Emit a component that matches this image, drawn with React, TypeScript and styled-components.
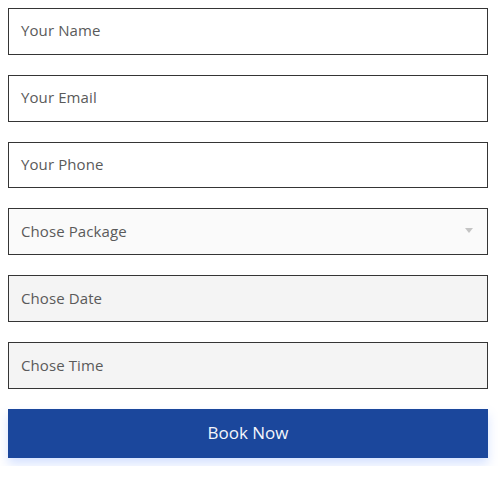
import React from "react";
import styled, { createGlobalStyle } from "styled-components";

const Global = createGlobalStyle`
  html, body { margin: 0; padding: 0; background: #fff; }
  body { padding: 8px; font-family: "Open Sans", "Liberation Sans", sans-serif; }
  * { box-sizing: border-box; }
`;

const Form = styled.form`
  display: flex;
  flex-direction: column;
  width: 480px;
  gap: 20px;
`;

const Field = styled.div<{ $bg?: string }>`
  height: 46.83px;
  border: 1px solid #353535;
  background: ${(p) => p.$bg || "#fff"};
  display: flex;
  align-items: center;
  justify-content: space-between;
  padding: 0 14px 2px 12px;
  font-size: 15px;
  color: #5a5a5a;
  font-weight: 400;
  letter-spacing: 0.1px;
`;

const Caret = styled.span`
  width: 0;
  height: 0;
  border-left: 4px solid transparent;
  border-right: 4px solid transparent;
  border-top: 5px solid #c4c4c4;
`;

const Button = styled.button`
  height: 49px;
  border: none;
  background: #1b479c;
  color: #f4f6fb;
  font-family: inherit;
  font-size: 17px;
  font-weight: 400;
  padding-bottom: 2px;
  box-shadow: 0 6px 10px rgba(90, 140, 255, 0.25);
  cursor: pointer;
`;

export default function App() {
  return (
    <>
      <Global />
      <Form>
        <Field>Your Name</Field>
        <Field>Your Email</Field>
        <Field>Your Phone</Field>
        <Field $bg="#fafafa">
          Chose Package
          <Caret />
        </Field>
        <Field $bg="#f4f4f4">Chose Date</Field>
        <Field $bg="#f4f4f4">Chose Time</Field>
        <Button type="button">Book Now</Button>
      </Form>
    </>
  );
}
